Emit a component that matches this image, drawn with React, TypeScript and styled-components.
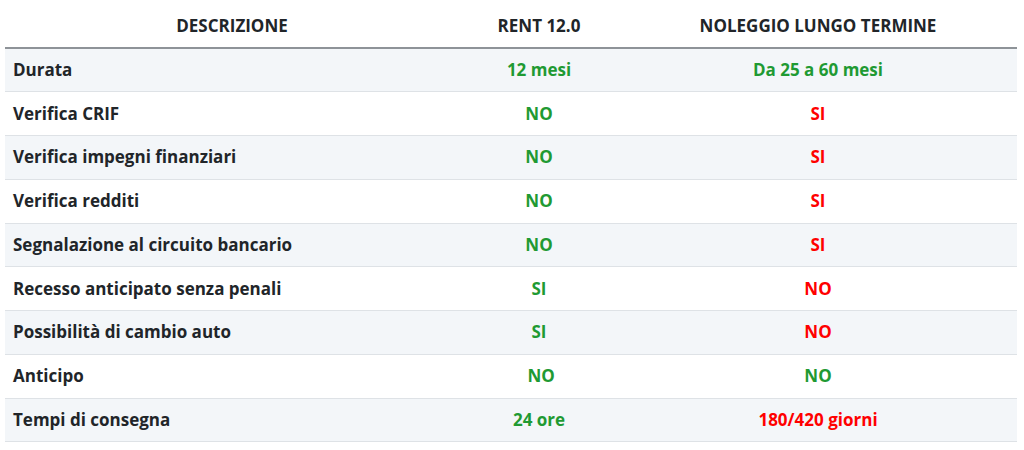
import React from 'react';
import styled, { createGlobalStyle } from 'styled-components';

const GlobalStyle = createGlobalStyle`
  html, body {
    margin: 0;
    background: #ffffff;
  }
  body {
    font-family: "Open Sans", "Liberation Sans", sans-serif;
    color: #212529;
  }
`;

const Page = styled.div`
  padding: 5px 7px 0 5px;
`;

const Table = styled.table`
  width: 100%;
  border-collapse: collapse;
  table-layout: fixed;
  font-size: 17px;
  font-weight: 700;
  line-height: 24px;
`;

const HeadCell = styled.th`
  height: 43px;
  padding: 0 8px;
  text-align: center;
  font-weight: 700;
  color: #212529;
  border-bottom: 2px solid #8e9398;
  box-sizing: border-box;
`;

const Row = styled.tr<{ $striped: boolean }>`
  background: ${(p) => (p.$striped ? '#f3f6f9' : '#ffffff')};
`;

const Cell = styled.td<{ $tone?: 'good' | 'bad'; $label?: boolean }>`
  height: 43.75px;
  padding: 0 8px;
  box-sizing: border-box;
  border-bottom: 1px solid #dee2e6;
  text-align: ${(p) => (p.$label ? 'left' : 'center')};
  color: ${(p) =>
    p.$tone === 'good' ? '#1f9a33' : p.$tone === 'bad' ? '#ff0000' : '#212529'};
  white-space: nowrap;
`;

type Value = { text: string; tone: 'good' | 'bad' };

const rows: { label: string; rent: Value; nlt: Value }[] = [
  { label: 'Durata', rent: { text: '12 mesi', tone: 'good' }, nlt: { text: 'Da 25 a 60 mesi', tone: 'good' } },
  { label: 'Verifica CRIF', rent: { text: 'NO', tone: 'good' }, nlt: { text: 'SI', tone: 'bad' } },
  { label: 'Verifica impegni finanziari', rent: { text: 'NO', tone: 'good' }, nlt: { text: 'SI', tone: 'bad' } },
  { label: 'Verifica redditi', rent: { text: 'NO', tone: 'good' }, nlt: { text: 'SI', tone: 'bad' } },
  { label: 'Segnalazione al circuito bancario', rent: { text: 'NO', tone: 'good' }, nlt: { text: 'SI', tone: 'bad' } },
  { label: 'Recesso anticipato senza penali', rent: { text: 'SI', tone: 'good' }, nlt: { text: 'NO', tone: 'bad' } },
  { label: 'Possibilità di cambio auto', rent: { text: 'SI', tone: 'good' }, nlt: { text: 'NO', tone: 'bad' } },
  { label: 'Anticipo', rent: { text: '\u00a0NO', tone: 'good' }, nlt: { text: 'NO', tone: 'good' } },
  { label: 'Tempi di consegna', rent: { text: '24 ore', tone: 'good' }, nlt: { text: '180/420 giorni', tone: 'bad' } },
];

const App: React.FC = () => {
  return (
    <Page>
      <GlobalStyle />
      <Table>
        <colgroup>
          <col style={{ width: 454 }} />
          <col style={{ width: 160 }} />
          <col />
        </colgroup>
        <thead>
          <tr>
            <HeadCell>DESCRIZIONE</HeadCell>
            <HeadCell>RENT 12.0</HeadCell>
            <HeadCell>NOLEGGIO LUNGO TERMINE</HeadCell>
          </tr>
        </thead>
        <tbody>
          {rows.map((r, i) => (
            <Row key={r.label} $striped={i % 2 === 0}>
              <Cell $label>{r.label}</Cell>
              <Cell $tone={r.rent.tone}>{r.rent.text}</Cell>
              <Cell $tone={r.nlt.tone}>{r.nlt.text}</Cell>
            </Row>
          ))}
        </tbody>
      </Table>
    </Page>
  );
};

export default App;
